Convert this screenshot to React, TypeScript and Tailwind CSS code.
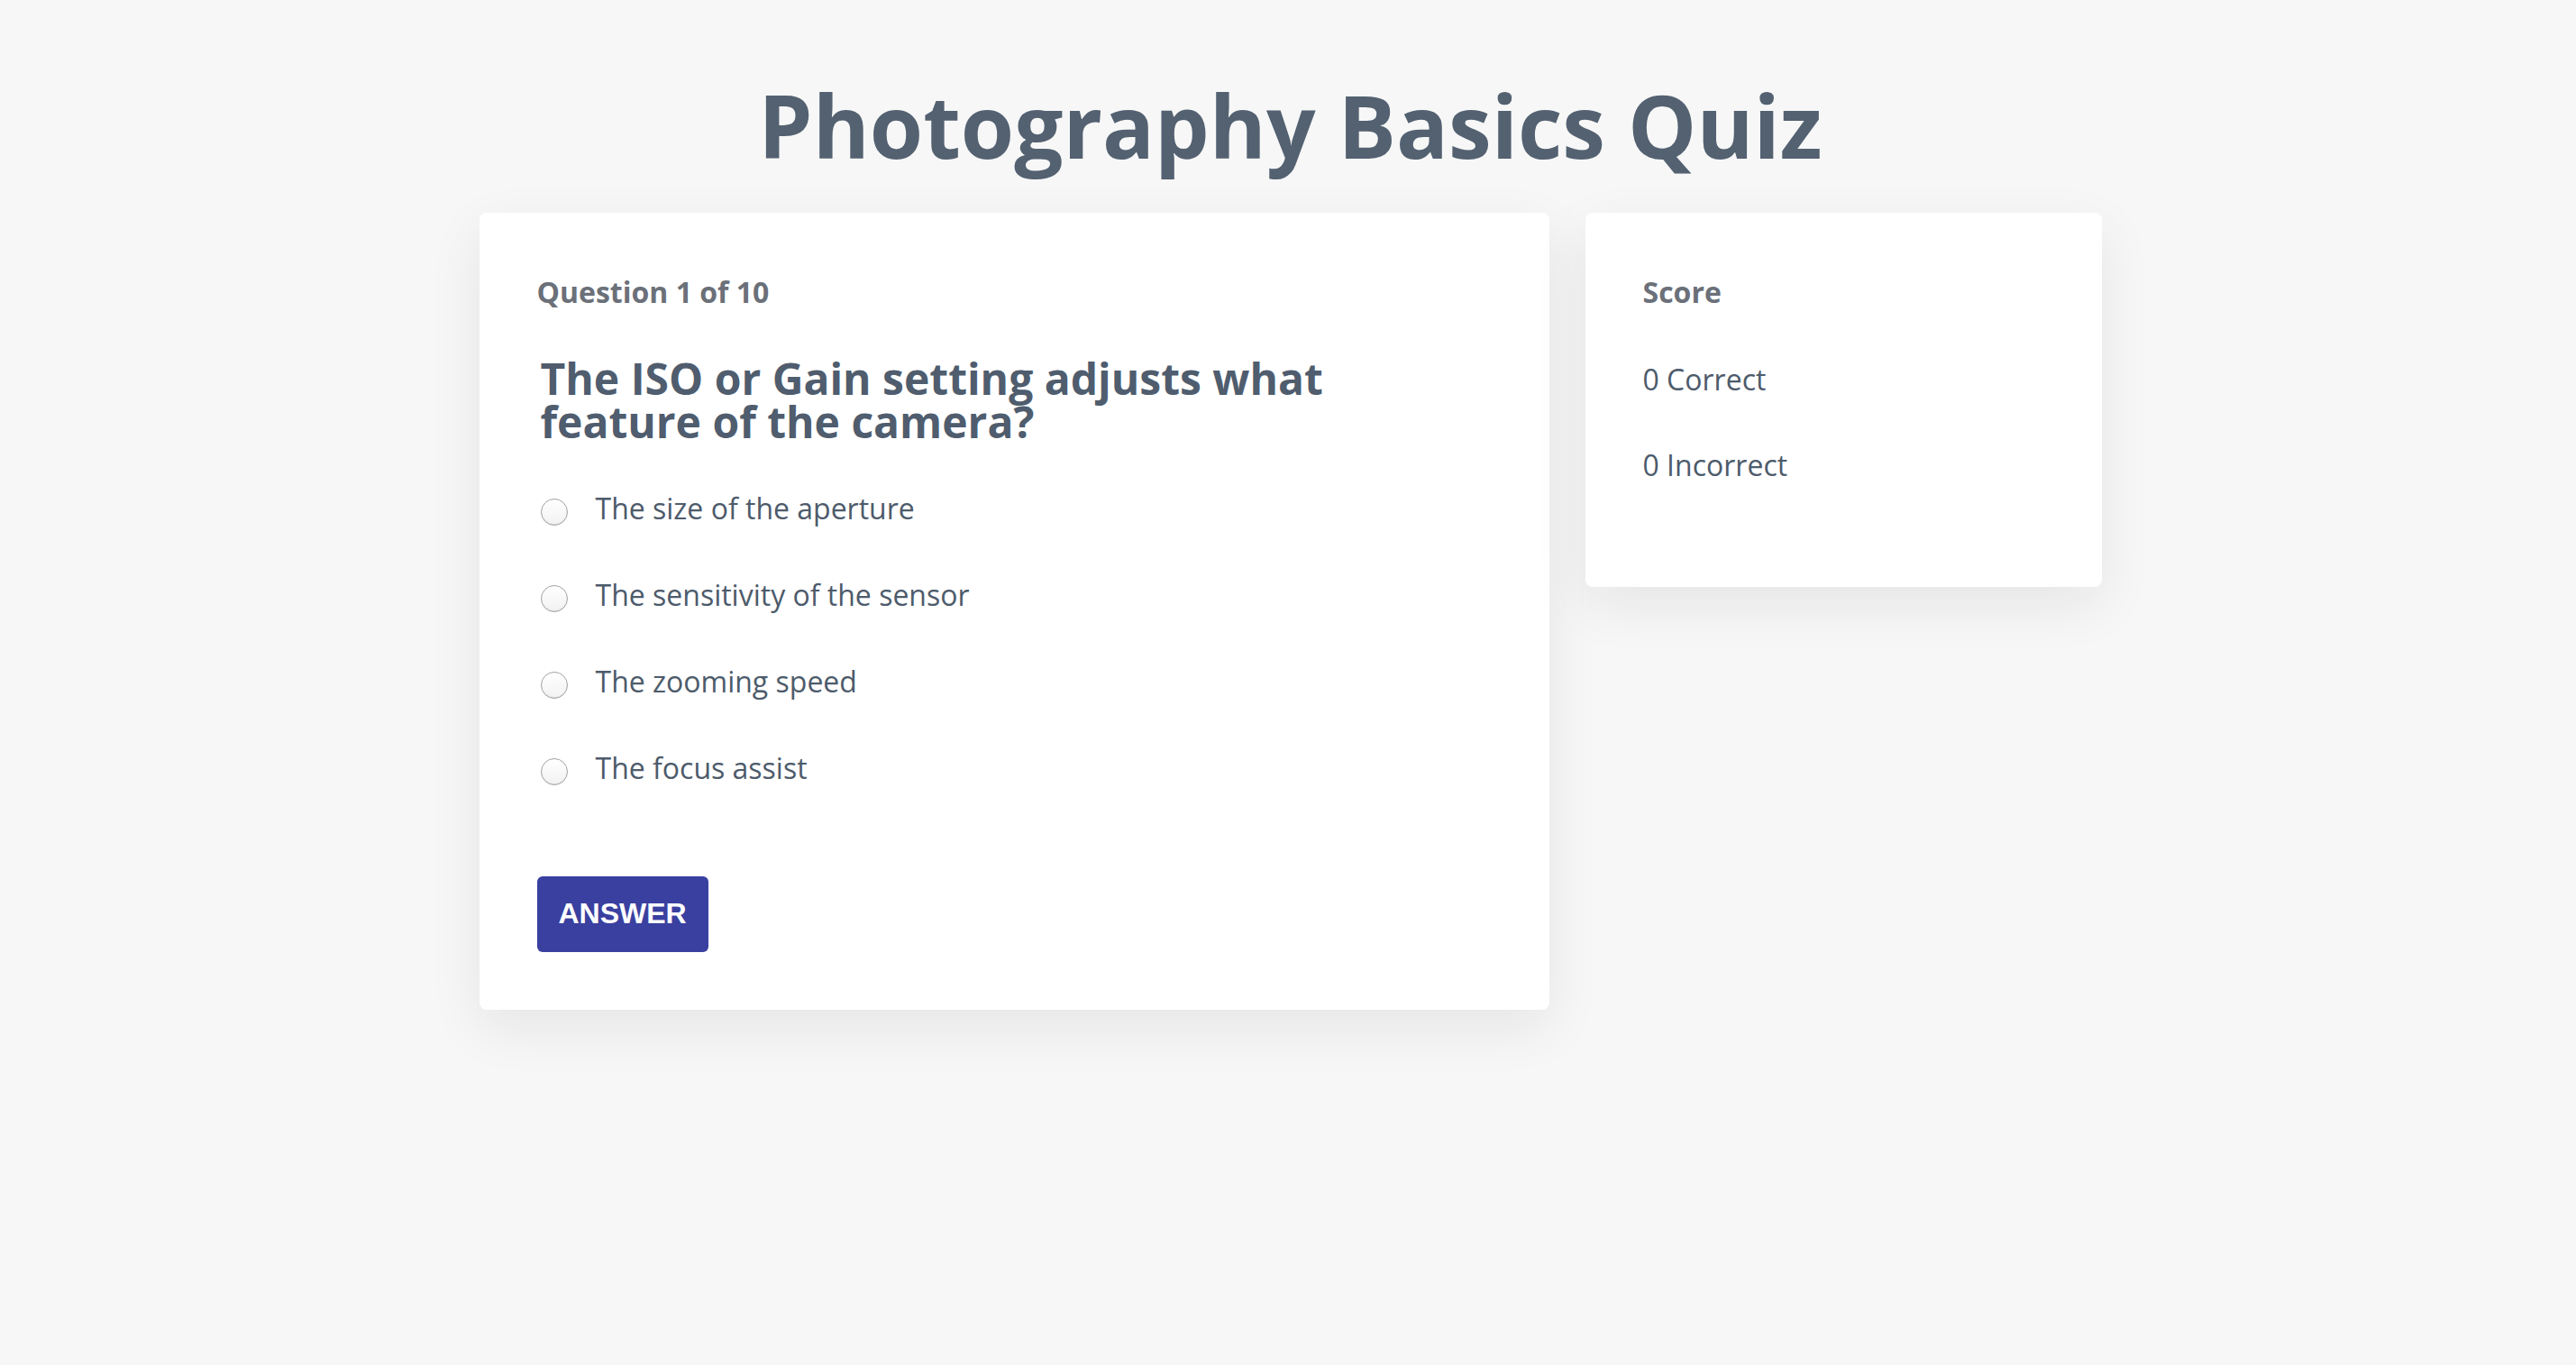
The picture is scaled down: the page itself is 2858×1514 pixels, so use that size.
import React from "react";

const options = [
  "The size of the aperture",
  "The sensitivity of the sensor",
  "The zooming speed",
  "The focus assist",
];

function Radio() {
  return (
    <span className="mt-[11px] ml-[4px] block h-[30px] w-[30px] shrink-0 rounded-full border-[1.5px] border-[#a2a2a2] bg-gradient-to-b from-white to-[#f2f2f2] shadow-[inset_0_-1px_1px_rgba(0,0,0,0.08)]" />
  );
}

export default function App() {
  return (
    <div
      className="min-h-screen bg-[#f7f7f7] pl-[5px]"
      style={{ fontFamily: '"Open Sans", "Noto Sans", sans-serif' }}
    >
      <h1 className="pt-[91px] text-center text-[96px] font-bold leading-none text-[#536171]">
        Photography Basics Quiz
      </h1>
      <div className="mt-[49px] flex items-start justify-center gap-[40px]">
        <div className="w-[1187px] rounded-[8px] bg-white px-[64px] pt-[66px] pb-[64px] shadow-[0_20px_60px_rgba(20,30,50,0.08)]">
          <div className="text-[32px] font-bold leading-[44px] text-[#6b7079]">
            Question 1 of 10
          </div>
          <h2 className="mt-[50px] ml-[4px] max-w-[900px] text-[48px] font-bold leading-[48px] text-[#4f5d6e]">
            The ISO or Gain setting adjusts what feature of the camera?
          </h2>
          <div className="mt-[50px] flex flex-col gap-[52px]">
            {options.map((o) => (
              <label key={o} className="flex items-start gap-[31px]">
                <Radio />
                <span className="text-[32px] leading-[44px] text-[#4d5b6b]">{o}</span>
              </label>
            ))}
          </div>
          <button
            className="mt-[98px] block h-[84px] rounded-[6px] bg-[#3a40a0] px-[24px] pb-[2px] text-[32px] font-bold text-white"
            style={{ fontFamily: '"Liberation Sans", Arial, sans-serif' }}
          >
            ANSWER
          </button>
        </div>
        <div className="w-[573px] rounded-[8px] bg-white px-[64px] pt-[66px] pb-[113px] shadow-[0_20px_60px_rgba(20,30,50,0.08)]">
          <div className="text-[32px] font-bold leading-[44px] text-[#6b7079]">Score</div>
          <div className="mt-[53px] text-[32px] leading-[44px] text-[#4d5b6b]">0 Correct</div>
          <div className="mt-[51px] text-[32px] leading-[44px] text-[#4d5b6b]">0 Incorrect</div>
        </div>
      </div>
    </div>
  );
}
